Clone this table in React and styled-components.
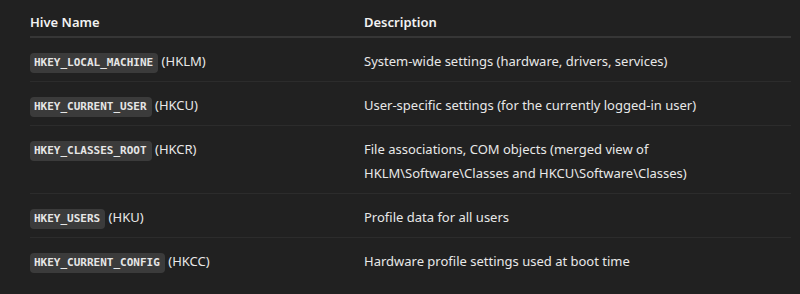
import React from 'react';
import styled, { createGlobalStyle } from 'styled-components';

const GlobalStyle = createGlobalStyle`
  html, body {
    margin: 0;
    padding: 0;
    background: #212121;
  }
  body {
    font-family: "Noto Sans", "Open Sans", sans-serif;
    -webkit-font-smoothing: antialiased;
  }
`;

const Page = styled.div`
  width: 800px;
  height: 294px;
  box-sizing: border-box;
  padding: 0 9px 0 30px;
  background: #212121;
  overflow: hidden;
`;

const Table = styled.table`
  width: 100%;
  border-collapse: collapse;
  font-size: 13px;
  line-height: 24px;
  color: #e8e8e8;
`;

const HeadCell = styled.th`
  text-align: left;
  font-weight: 600;
  color: #f2f2f2;
  padding: 10px 0 2px;
  border-bottom: 2px solid #363636;
  width: ${p => p.width || 'auto'};
`;

const Row = styled.tr`
  border-bottom: 1px solid ${p => (p.last ? 'transparent' : '#2c2c2c')};
`;

const Cell = styled.td`
  padding: 11px 0 8px;
  vertical-align: top;
`;

const Code = styled.code`
  display: inline-block;
  height: 20px;
  line-height: 20px;
  padding: 0 5px 0 4px;
  border-radius: 4px;
  background: #3b3b3b;
  color: #e6e6e6;
  font-family: "DejaVu Sans Mono", "Liberation Mono", monospace;
  font-size: 11px;
  font-weight: 700;
  vertical-align: middle;
`;

const hives = [
  { key: 'HKEY_LOCAL_MACHINE', abbr: 'HKLM', desc: 'System-wide settings (hardware, drivers, services)' },
  { key: 'HKEY_CURRENT_USER', abbr: 'HKCU', desc: 'User-specific settings (for the currently logged-in user)' },
  {
    key: 'HKEY_CLASSES_ROOT',
    abbr: 'HKCR',
    desc: 'File associations, COM objects (merged view of',
    desc2: 'HKLM\\Software\\Classes and HKCU\\Software\\Classes)',
  },
  { key: 'HKEY_USERS', abbr: 'HKU', desc: 'Profile data for all users' },
  { key: 'HKEY_CURRENT_CONFIG', abbr: 'HKCC', desc: 'Hardware profile settings used at boot time' },
];

export default function App() {
  return (
    <Page>
      <GlobalStyle />
      <Table>
        <thead>
          <tr>
            <HeadCell width="334px">Hive Name</HeadCell>
            <HeadCell>Description</HeadCell>
          </tr>
        </thead>
        <tbody>
          {hives.map((h, i) => (
            <Row key={h.key} last={i === hives.length - 1}>
              <Cell>
                <Code>{h.key}</Code> ({h.abbr})
              </Cell>
              <Cell>
                {h.desc}
                {h.desc2 && <br />}
                {h.desc2}
              </Cell>
            </Row>
          ))}
        </tbody>
      </Table>
    </Page>
  );
}
